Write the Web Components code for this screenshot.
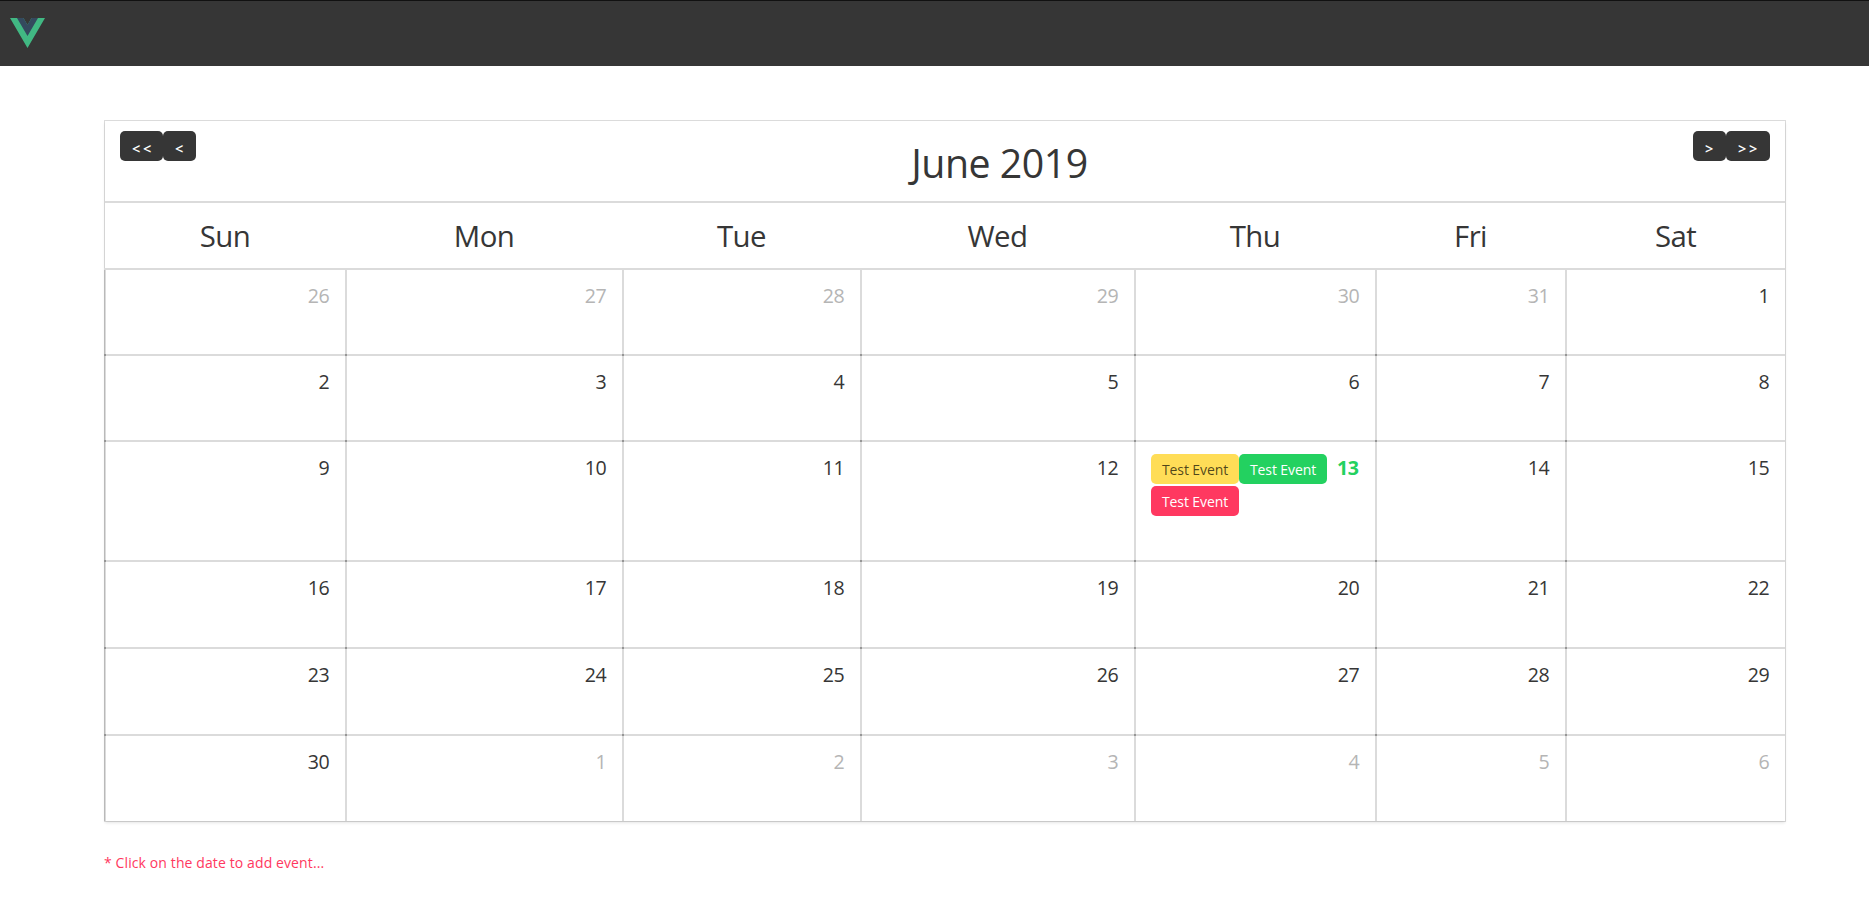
<!DOCTYPE html>
<html lang="en">
<head>
<meta charset="utf-8">
<title>Calendar</title>
<style>
body{margin:0;background:#fff;color:#363636;font-family:"Open Sans","Noto Sans",sans-serif}
</style>
</head>
<body>
<app-navbar></app-navbar>
<event-calendar></event-calendar>
<script>
class Base extends HTMLElement{
  constructor(){super();this.attachShadow({mode:'open'});}
  draw(html){this.shadowRoot.innerHTML=html;}
}
class AppNavbar extends Base{
  connectedCallback(){this.draw(`<style>
:host{display:flex;box-sizing:border-box;height:66px;background:#363636;border-top:1px solid #111;padding:17px 10px}
svg{display:block;width:35px;height:30px}
</style>
<svg viewBox="0 0 261.76 226.69" preserveAspectRatio="none"><path fill="#41b883" d="M161.1 0l-30.23 52.35L100.65 0H0l130.87 226.69L261.75 0z"/><path fill="#34495e" d="M161.1 0l-30.23 52.35L100.65 0H52.35l78.52 136.01L209.4 0z"/></svg>`);}
}
class NavButton extends Base{
  connectedCallback(){this.draw(`<style>
:host{display:block}
button{display:block;box-sizing:border-box;width:33px;height:30px;border:0;border-radius:5px;background:#363636;color:#fff;font:600 14.5px/33px "Open Sans",sans-serif;letter-spacing:2.7px;text-align:left;padding:1px 0 0 12px;margin:0}
:host([double]) button{width:43px}
:host([double=next]) button{width:44px}
</style><button><slot></slot></button>`);}
}
class EventTag extends Base{
  connectedCallback(){this.draw(`<style>
:host{display:block;box-sizing:border-box;width:88px;height:30px;border-radius:5px;text-align:center;font-size:14px;line-height:31px;letter-spacing:-.1px;white-space:nowrap;color:#fff}
:host([kind=warning]){background:#ffdd57;color:rgba(0,0,0,.7)}
:host([kind=success]){background:#23d160}
:host([kind=danger]){background:#ff3860}
</style><slot></slot>`);}
}
class DayCell extends Base{
  connectedCallback(){this.draw(`<style>
:host{display:flex;box-sizing:border-box;position:relative;border-left:2px solid #dbdbdb;border-top:2px solid #dbdbdb;padding:10px 16px 0 15px;justify-content:space-between;align-items:flex-start}
:host([first])::before{content:"";position:absolute;left:-2px;top:0;bottom:0;width:1px;background:#b9b9b9}
:host([joint])::after{content:"";position:absolute;left:-2px;top:-2px;width:2px;height:2px;background:#959595}
.events{display:flex;flex-wrap:wrap;gap:2px 0;width:176px;padding-top:2px}
.n{margin-left:auto;font-size:19.6px;line-height:32px;letter-spacing:-.43px;margin-right:-.4px}
:host([muted]) .n{color:#b5b5b5}
:host([today]) .n{color:#23d160;font-weight:700;margin-right:.4px}
</style><div class="events"><slot></slot></div><span class="n">${this.getAttribute('day')}</span>`);}
}
class EventCalendar extends Base{
  connectedCallback(){
    const names=['Sun','Mon','Tue','Wed','Thu','Fri','Sat'];
    const cells=[];
    for(let i=0;i<42;i++){
      const n=i<6?26+i:i<36?i-5:i-35, out=i<6||i>35, today=!out&&n===13;
      cells.push(`<day-cell day="${n}"${out?' muted':''}${today?' today':''}${i%7===0?' first':''}${i>6?' joint':''}>${today?'<event-tag kind="warning">Test Event</event-tag><event-tag kind="success">Test Event</event-tag><event-tag kind="danger">Test Event</event-tag>':''}</day-cell>`);
    }
    this.draw(`<style>
:host{display:block;padding:55px 84px 0 105px}
.card{width:1680px;height:700px;box-shadow:0 2px 3px rgba(10,10,10,.1),0 0 0 1px rgba(10,10,10,.14)}
header{display:flex;height:80px;justify-content:space-between;padding:10px 15px 0;box-sizing:border-box}
.group{display:flex;align-items:flex-start}
h1{margin:0;padding-left:110px;font-weight:400;font-size:39.3px;line-height:54px;padding-top:5px;letter-spacing:-.5px}
.names,.days{display:grid;grid-template-columns:241px 277px 238px 274px 241px 190px 220px;margin-left:-1px}
.names{border-top:2px solid #dbdbdb;height:65px;margin-left:0}
.names span{text-align:center;font-size:29.4px;line-height:66px;letter-spacing:-.6px;padding-right:1px}
.days{grid-template-rows:86px 86px 120px 87px 87px 87px}
p{margin:30px 0 0 -1px;color:#ff3860;font-size:14px;line-height:24px;letter-spacing:.11px}
</style>
<div class="card">
<header><div class="group"><nav-button double="prev">&lt;&lt;</nav-button><nav-button>&lt;</nav-button></div><h1>June 2019</h1><div class="group"><nav-button>&gt;</nav-button><nav-button double="next">&gt;&gt;</nav-button></div></header>
<div class="names">${names.map(n=>`<span>${n}</span>`).join('')}</div>
<div class="days">${cells.join('')}</div>
</div>
<p>* Click on the date to add event...</p>`);
  }
}
customElements.define('app-navbar',AppNavbar);
customElements.define('nav-button',NavButton);
customElements.define('event-tag',EventTag);
customElements.define('day-cell',DayCell);
customElements.define('event-calendar',EventCalendar);
</script>
</body>
</html>
